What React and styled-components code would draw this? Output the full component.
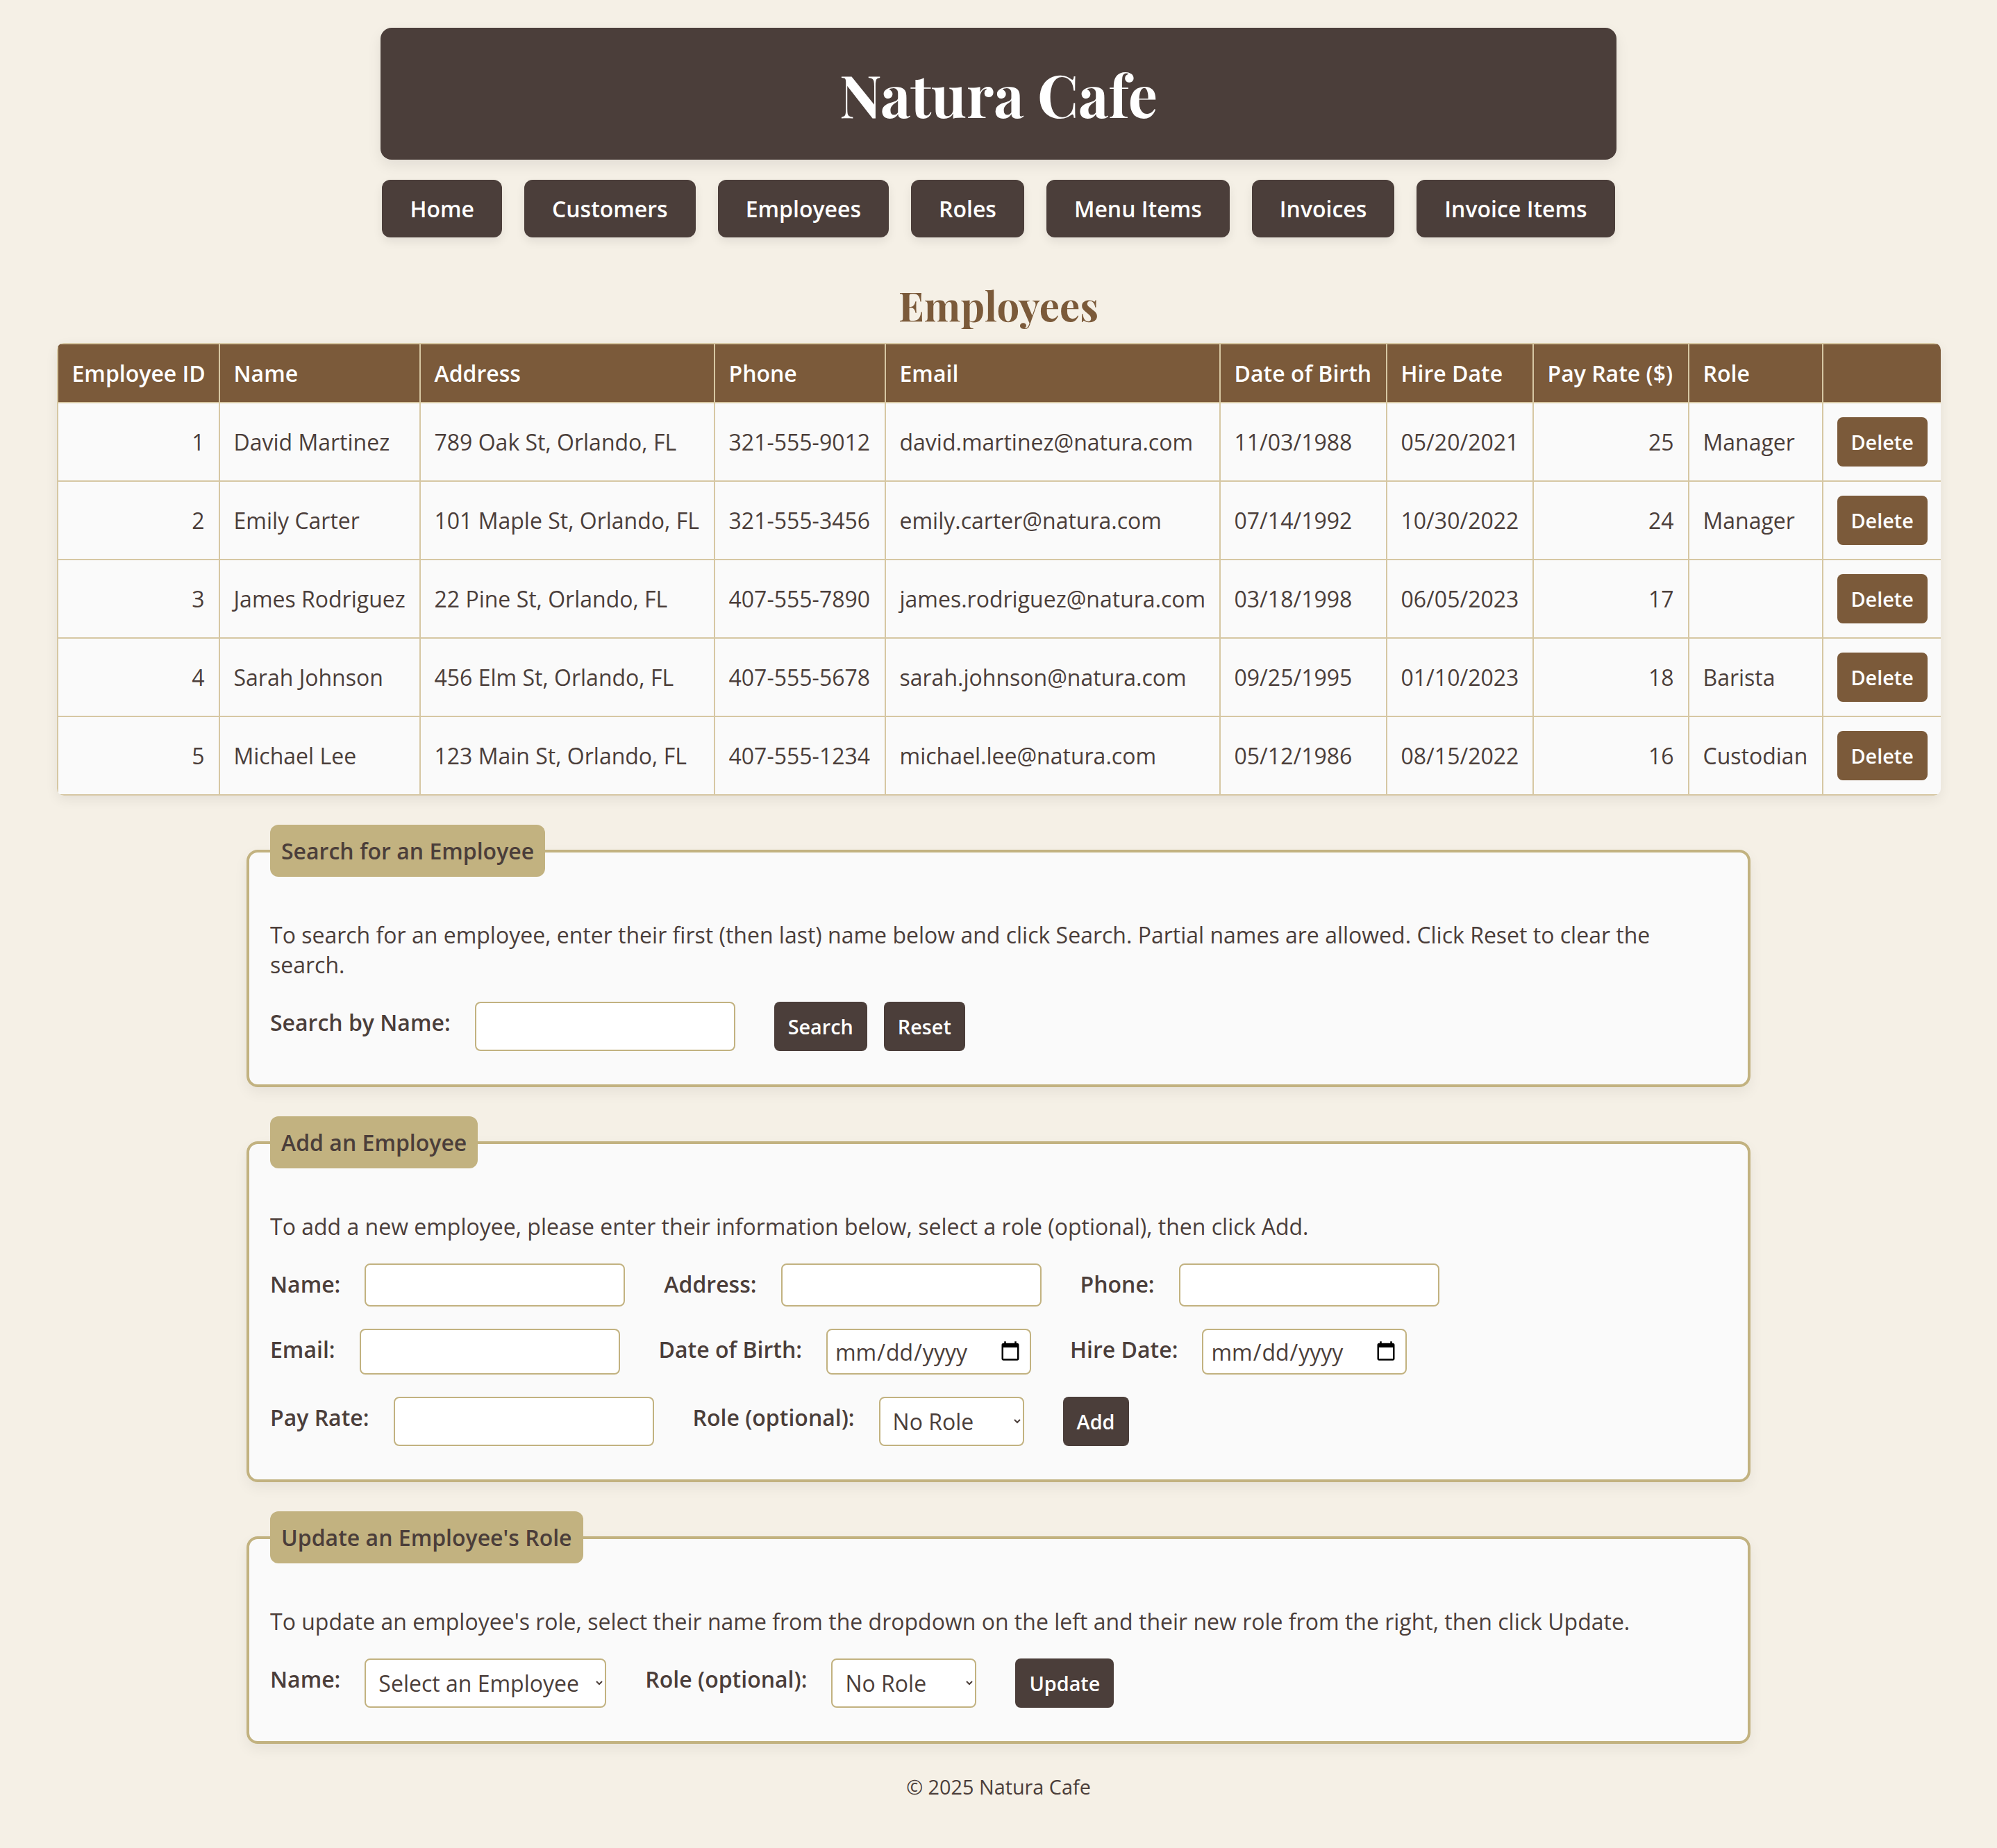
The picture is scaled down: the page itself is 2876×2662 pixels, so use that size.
import React from "react";
import styled, { createGlobalStyle } from "styled-components";

const dark = "#4b3e3a";
const brown = "#7b5a3a";
const tan = "#c2b280";
const line = "#d6c7a3";
const cream = "#f5f0e6";

const GlobalStyle = createGlobalStyle`
  body {
    margin: 0;
    background: ${cream};
    color: ${dark};
    font-family: "Open Sans", "Noto Sans", sans-serif;
  }
`;

const employees = [
  { id: 1, name: "David Martinez", address: "789 Oak St, Orlando, FL", phone: "321-555-9012", email: "david.martinez@natura.com", dob: "11/03/1988", hire: "05/20/2021", pay: 25, role: "Manager" },
  { id: 2, name: "Emily Carter", address: "101 Maple St, Orlando, FL", phone: "321-555-3456", email: "emily.carter@natura.com", dob: "07/14/1992", hire: "10/30/2022", pay: 24, role: "Manager" },
  { id: 3, name: "James Rodriguez", address: "22 Pine St, Orlando, FL", phone: "407-555-7890", email: "james.rodriguez@natura.com", dob: "03/18/1998", hire: "06/05/2023", pay: 17, role: "" },
  { id: 4, name: "Sarah Johnson", address: "456 Elm St, Orlando, FL", phone: "407-555-5678", email: "sarah.johnson@natura.com", dob: "09/25/1995", hire: "01/10/2023", pay: 18, role: "Barista" },
  { id: 5, name: "Michael Lee", address: "123 Main St, Orlando, FL", phone: "407-555-1234", email: "michael.lee@natura.com", dob: "05/12/1986", hire: "08/15/2022", pay: 16, role: "Custodian" },
];

const columns = [
  { label: "Employee ID", width: 233 },
  { label: "Name", width: 289 },
  { label: "Address", width: 424 },
  { label: "Phone", width: 246 },
  { label: "Email", width: 482 },
  { label: "Date of Birth", width: 240 },
  { label: "Hire Date", width: 211 },
  { label: "Pay Rate ($)", width: 224 },
  { label: "Role", width: 193 },
  { label: "", width: 171 },
];

const navItems = ["Home", "Customers", "Employees", "Roles", "Menu Items", "Invoices", "Invoice Items"];

export default function App() {
  return (
    <React.Fragment>
      <GlobalStyle />
      <Page>
        <Header>
          <Title>Natura Cafe</Title>
        </Header>
        <Nav>
          {navItems.map((item) => (
            <NavButton key={item} href="#">
              {item}
            </NavButton>
          ))}
        </Nav>

        <PageTitle>Employees</PageTitle>

        <TableWrap>
          <Table>
            <colgroup>
              {columns.map((c, i) => (
                <col key={i} style={{ width: c.width }} />
              ))}
            </colgroup>
            <thead>
              <tr>
                {columns.map((c, i) => (
                  <Th key={i}>{c.label}</Th>
                ))}
              </tr>
            </thead>
            <tbody>
              {employees.map((e) => (
                <tr key={e.id}>
                  <Td $right>{e.id}</Td>
                  <Td>{e.name}</Td>
                  <Td>{e.address}</Td>
                  <Td>{e.phone}</Td>
                  <Td>{e.email}</Td>
                  <Td>{e.dob}</Td>
                  <Td>{e.hire}</Td>
                  <Td $right>{e.pay}</Td>
                  <Td>{e.role}</Td>
                  <Td $center>
                    <DeleteButton>Delete</DeleteButton>
                  </Td>
                </tr>
              ))}
            </tbody>
          </Table>
        </TableWrap>

        <Panel>
          <Legend>Search for an Employee</Legend>
          <Intro>
            To search for an employee, enter their first (then last) name below and click Search.
            Partial names are allowed. Click Reset to clear the search.
          </Intro>
          <FieldRow>
            <Label>Search by Name:</Label>
            <TextInput type="text" />
            <ActionButton $gap={24}>Search</ActionButton>
            <ActionButton>Reset</ActionButton>
          </FieldRow>
        </Panel>

        <Panel>
          <Legend>Add an Employee</Legend>
          <Intro>
            To add a new employee, please enter their information below, select a role (optional), then click Add.
          </Intro>
          <FieldRow>
            <Label>Name:</Label>
            <TextInput type="text" />
            <Label>Address:</Label>
            <TextInput type="text" />
            <Label>Phone:</Label>
            <TextInput type="text" />
          </FieldRow>
          <FieldRow>
            <Label>Email:</Label>
            <TextInput type="email" />
            <Label>Date of Birth:</Label>
            <DateInput type="date" />
            <Label>Hire Date:</Label>
            <DateInput type="date" />
          </FieldRow>
          <FieldRow>
            <Label>Pay Rate:</Label>
            <TextInput type="text" />
            <Label>Role (optional):</Label>
            <Select $w={209} defaultValue="">
              <option value="">No Role</option>
              <option>Manager</option>
              <option>Barista</option>
              <option>Custodian</option>
            </Select>
            <ActionButton>Add</ActionButton>
          </FieldRow>
        </Panel>

        <Panel>
          <Legend>Update an Employee's Role</Legend>
          <Intro>
            To update an employee's role, select their name from the dropdown on the left and their new role from the right, then click Update.
          </Intro>
          <FieldRow>
            <Label>Name:</Label>
            <Select $w={348} defaultValue="">
              <option value="">Select an Employee</option>
              {employees.map((e) => (
                <option key={e.id}>{e.name}</option>
              ))}
            </Select>
            <Label>Role (optional):</Label>
            <Select $w={209} defaultValue="">
              <option value="">No Role</option>
              <option>Manager</option>
              <option>Barista</option>
              <option>Custodian</option>
            </Select>
            <ActionButton>Update</ActionButton>
          </FieldRow>
        </Panel>

        <Footer>© 2025 Natura Cafe</Footer>
      </Page>
    </React.Fragment>
  );
}

const Page = styled.div`
  padding: 40px 0 70px;
`;

const Header = styled.header`
  width: 1780px;
  height: 190px;
  margin: 0 auto;
  background: ${dark};
  border-radius: 16px;
  box-shadow: 0 8px 20px rgba(0, 0, 0, 0.08);
  display: flex;
  align-items: center;
  justify-content: center;
`;

const Title = styled.h1`
  margin: 0;
  color: #ffffff;
  font-family: "Playfair Display", "Liberation Serif", serif;
  font-weight: 700;
  font-size: 84px;
  line-height: 1.2;
`;

const Nav = styled.nav`
  margin-top: 29px;
  display: flex;
  justify-content: center;
  gap: 32px;
`;

const NavButton = styled.a`
  display: block;
  padding: 20px 40px;
  background: ${dark};
  color: #ffffff;
  text-decoration: none;
  font-weight: 600;
  font-size: 32px;
  border-radius: 12px;
  box-shadow: 0 6px 14px rgba(0, 0, 0, 0.08);
`;

const PageTitle = styled.h2`
  margin: 58px 0 16px;
  text-align: center;
  color: ${brown};
  font-family: "Playfair Display", "Liberation Serif", serif;
  font-weight: 700;
  font-size: 58px;
  line-height: 78px;
`;

const TableWrap = styled.div`
  width: 2713px;
  margin: 0 auto 42px;
  border-radius: 10px;
  overflow: hidden;
  box-shadow: 0 6px 18px rgba(0, 0, 0, 0.07);
`;

const Table = styled.table`
  width: 100%;
  table-layout: fixed;
  border-collapse: collapse;
  background: #fafafa;
  font-size: 32px;
`;

const Th = styled.th`
  background: ${brown};
  color: #ffffff;
  font-weight: 600;
  text-align: left;
  padding: 20px 20px;
  border: 2px solid ${line};
  white-space: nowrap;
`;

const Td = styled.td`
  padding: 20px 20px;
  border: 2px solid ${line};
  text-align: ${(p) => (p.$right ? "right" : p.$center ? "center" : "left")};
  white-space: nowrap;
  color: ${dark};
`;

const DeleteButton = styled.button`
  background: ${brown};
  color: #ffffff;
  border: none;
  border-radius: 8px;
  padding: 16px 20px;
  font-family: inherit;
  font-weight: 600;
  font-size: 28.8px;
  line-height: normal;
  cursor: pointer;
`;

const Panel = styled.fieldset`
  box-sizing: border-box;
  width: 2166px;
  margin: 0 auto 42px;
  padding: 30px 30px 16px;
  background: #fafafa;
  border: 4px solid ${tan};
  border-radius: 16px;
  box-shadow: 0 8px 20px rgba(0, 0, 0, 0.06);
`;

const Legend = styled.legend`
  background: ${tan};
  color: ${dark};
  padding: 16px 16px;
  border-radius: 12px;
  font-weight: 600;
  font-size: 32px;
`;

const Intro = styled.p`
  margin: 32px 0;
  font-size: 32px;
`;

const FieldRow = styled.div`
  display: flex;
  align-items: stretch;
  margin-bottom: 32px;
`;

const Label = styled.label`
  padding-top: 8px;
  margin-right: 35px;
  font-weight: 600;
  font-size: 32px;
  white-space: nowrap;
`;

const TextInput = styled.input`
  box-sizing: border-box;
  width: ${(p) => p.$w || 375}px;
  min-height: 62px;
  margin: 0 56px 0 0;
  padding: 0 14px;
  border: 2px solid ${tan};
  border-radius: 8px;
  background: #ffffff;
  font-family: inherit;
  font-size: 26.67px;
  color: ${dark};
`;

const DateInput = styled(TextInput)`
  width: 295px;
  min-height: 66px;
  padding: 0 10px;
  font-size: 32px;
`;

const Select = styled.select`
  box-sizing: border-box;
  width: ${(p) => p.$w}px;
  margin-right: 56px;
  padding: 0 12px 0 14px;
  border: 2px solid ${tan};
  border-radius: 8px;
  background: #ffffff;
  font-family: inherit;
  font-size: 32px;
  color: ${dark};
`;

const ActionButton = styled.button`
  margin-right: ${(p) => p.$gap || 0}px;
  padding: 16px 20px;
  background: ${dark};
  color: #ffffff;
  border: none;
  border-radius: 8px;
  font-family: inherit;
  font-weight: 600;
  font-size: 28.8px;
  line-height: normal;
  cursor: pointer;
`;

const Footer = styled.footer`
  text-align: center;
  font-size: 28.8px;
  color: ${dark};
`;
